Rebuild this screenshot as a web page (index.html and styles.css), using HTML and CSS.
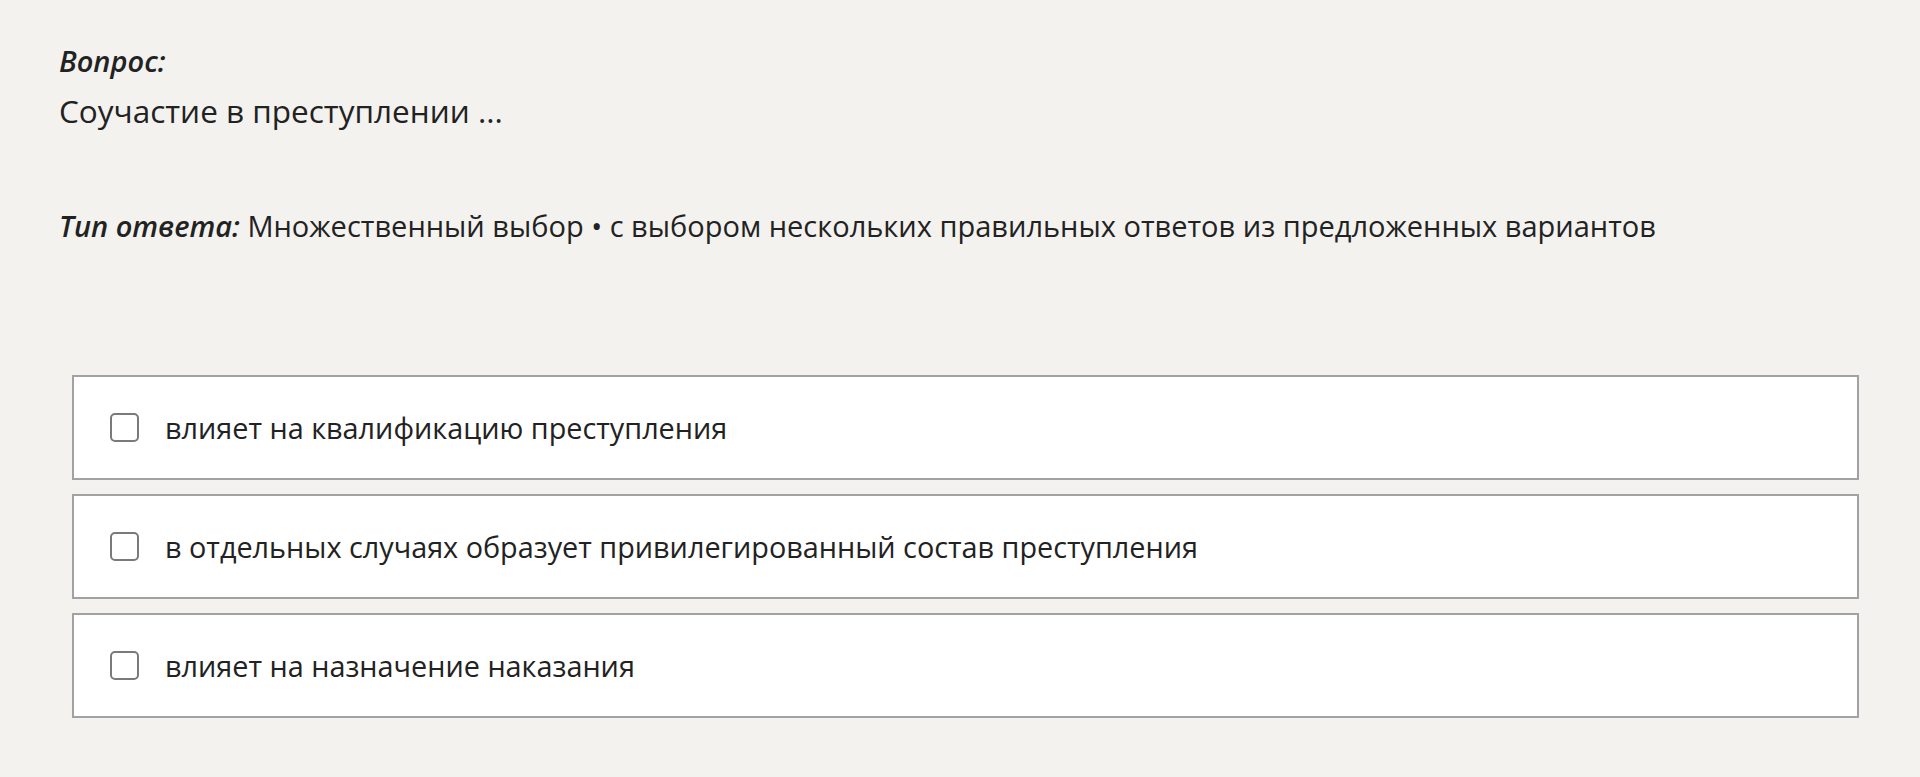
FILE: index.html
```html
<!DOCTYPE html>
<html lang="ru">
<head>
    <meta charset="UTF-8">
    <meta name="viewport" content="width=device-width, initial-scale=1.0">
    <title>Вопрос</title>
    <link rel="stylesheet" href="styles.css">
</head>
<body>
    <main class="quiz">
        <section class="question">
            <div class="label">Вопрос:</div>
            <div class="question-text">Соучастие в преступлении ...</div>
        </section>

        <p class="answer-type"><span class="label">Тип ответа:</span> Множественный выбор • с выбором нескольких правильных ответов из предложенных вариантов</p>

        <ul class="options">
            <li class="option">
                <span class="checkbox"></span>
                <span class="option-text">влияет на квалификацию преступления</span>
            </li>
            <li class="option">
                <span class="checkbox"></span>
                <span class="option-text">в отдельных случаях образует привилегированный состав преступления</span>
            </li>
            <li class="option">
                <span class="checkbox"></span>
                <span class="option-text">влияет на назначение наказания</span>
            </li>
        </ul>
    </main>
</body>
</html>
```

FILE: styles.css
```css
html, body{
    margin: 0;
    padding: 0;
}
body{
    background-color: #f3f2ef;
    color: #222;
    font-family: "Open Sans", "Noto Sans", sans-serif;
    font-size: 29px;
    line-height: 52px;
}
.quiz{
    padding: 35px 61px 40px 59px;
}
.label{
    font-style: italic;
    font-weight: 600;
}
.question-text{
    margin-top: -2px;
    font-size: 31.5px;
}
.answer-type{
    margin: 63px 0 0 0;
}
.answer-type .label{
    display: inline;
}
.options{
    list-style: none;
    margin: 123px 0 0 13px;
    padding: 0;
}
.option{
    display: flex;
    align-items: center;
    height: 105px;
    box-sizing: border-box;
    padding-left: 36px;
    margin-bottom: 14px;
    background-color: #fff;
    border: 2px solid #a2a2a2;
    font-size: 28.8px;
}
.checkbox{
    width: 29px;
    height: 29px;
    box-sizing: border-box;
    border: 2px solid #7a7a7a;
    border-radius: 5px;
    background-color: #fff;
    flex-shrink: 0;
    margin-right: 26px;
}
```
